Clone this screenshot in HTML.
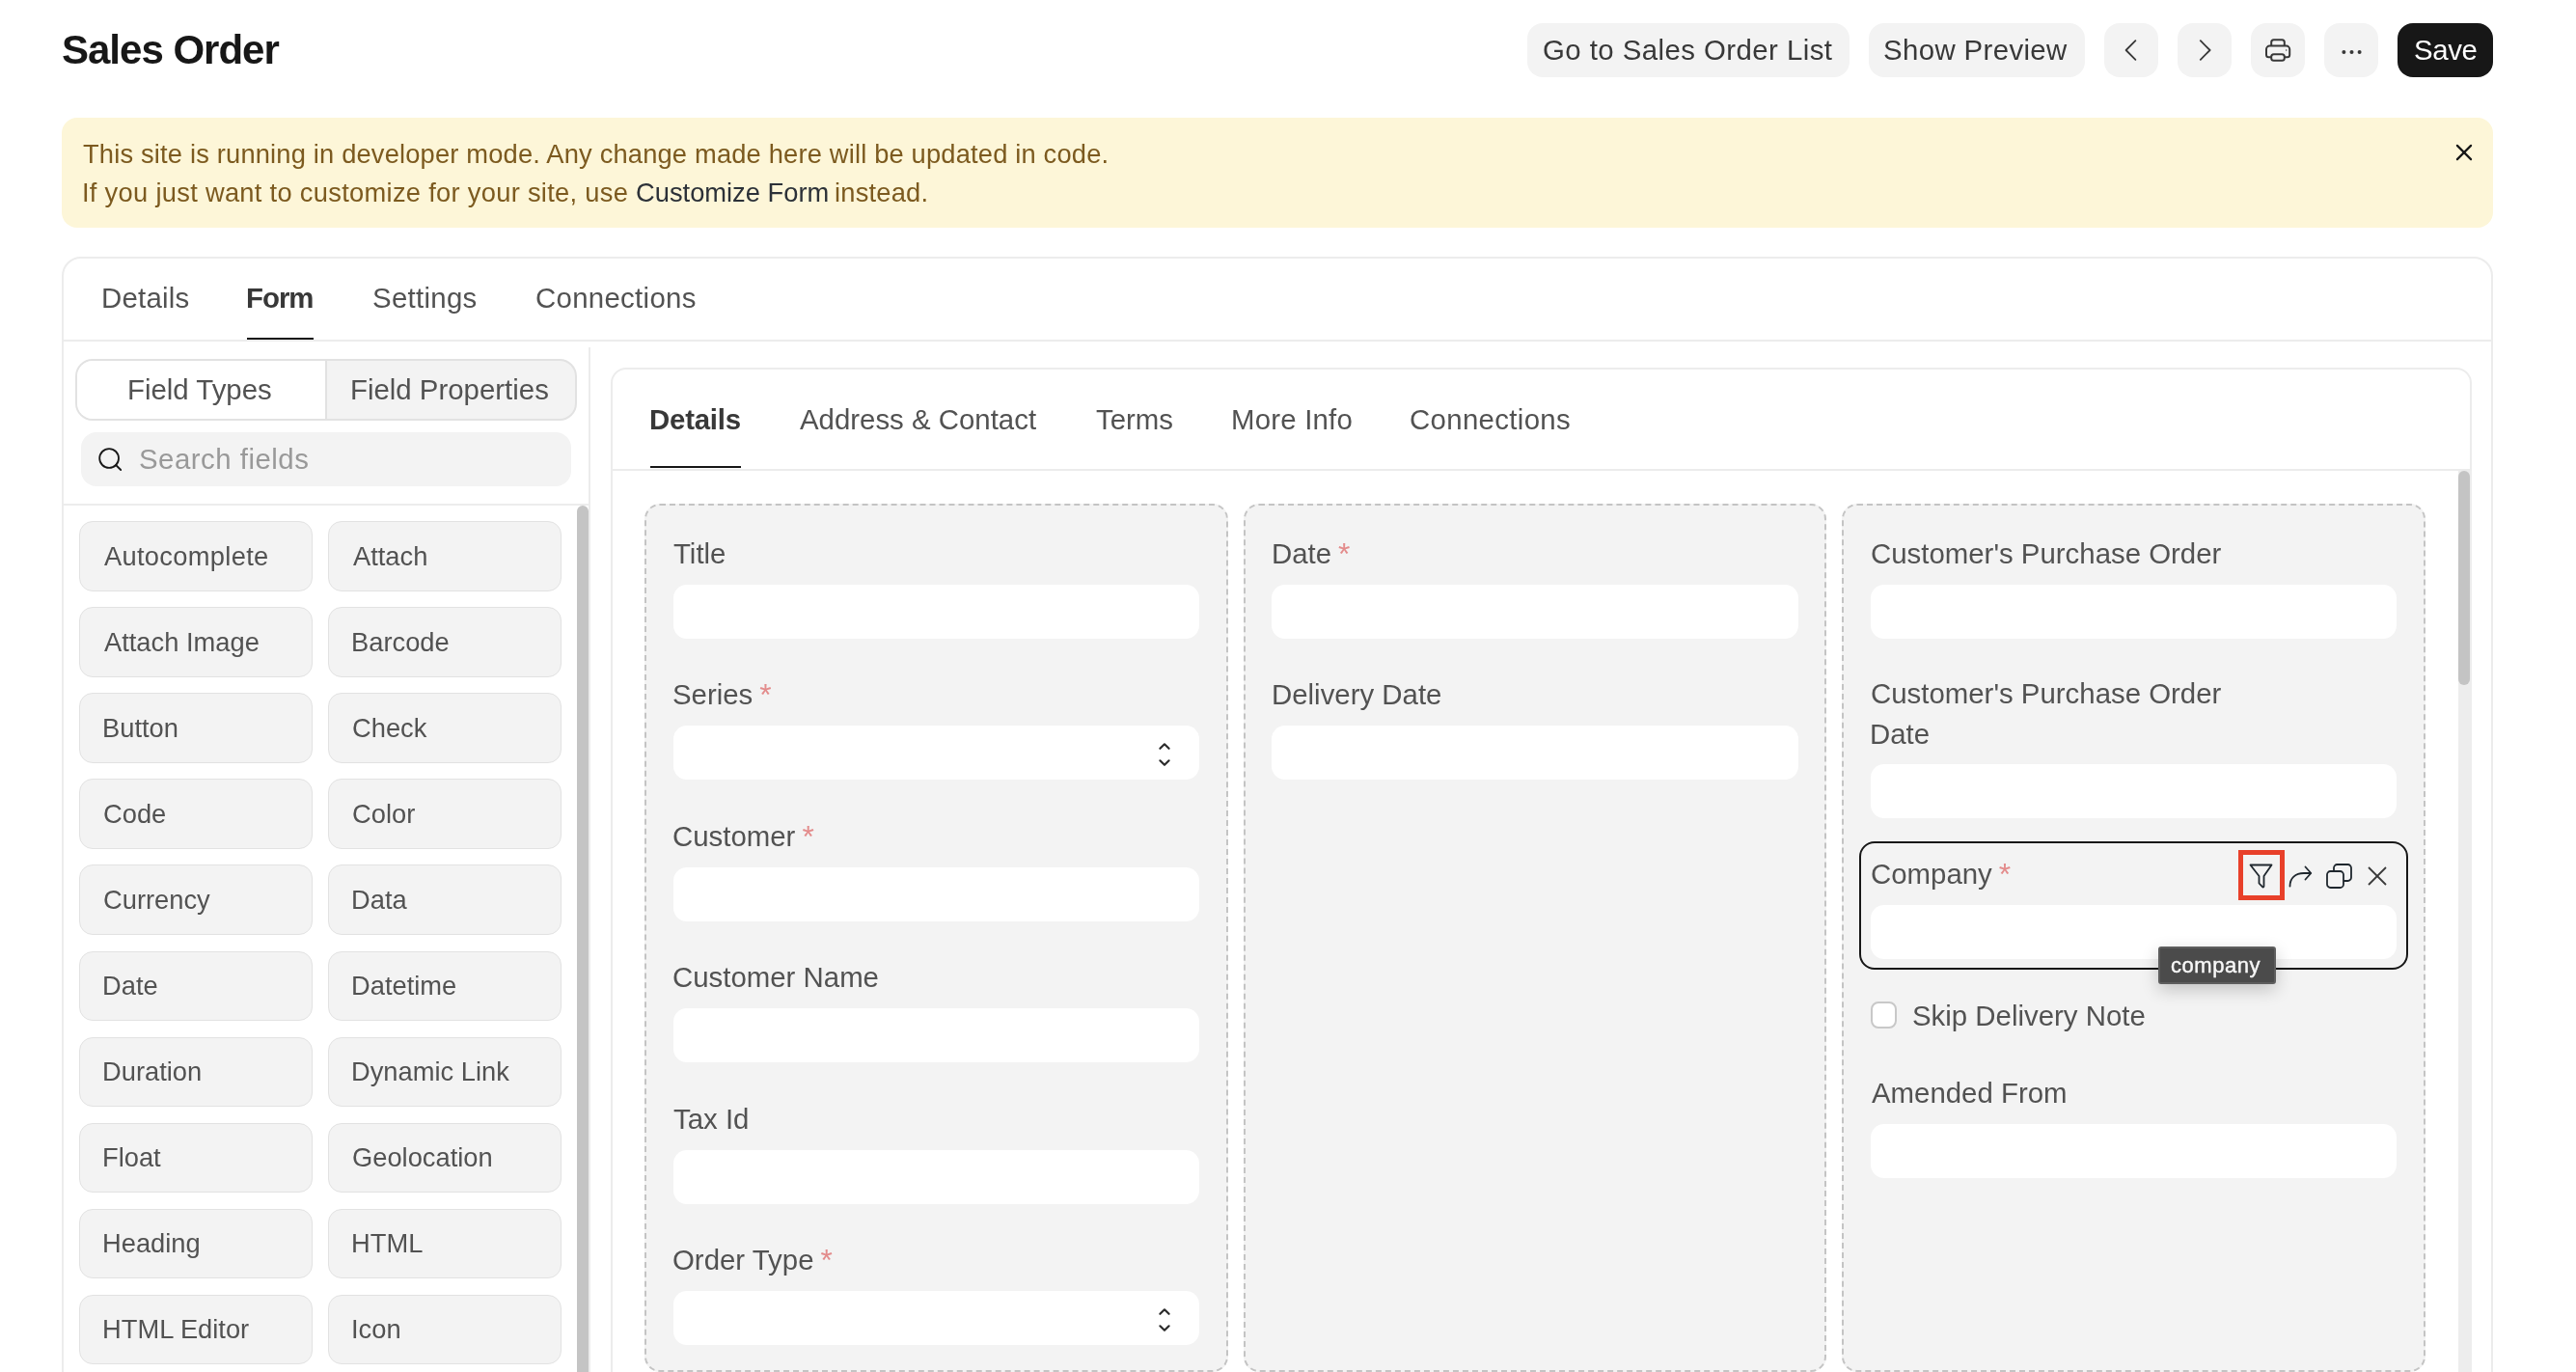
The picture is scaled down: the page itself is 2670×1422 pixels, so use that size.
<!DOCTYPE html>
<html><head><meta charset="utf-8"><title>Sales Order</title>
<style>
html,body{margin:0;padding:0;width:2670px;height:1422px;overflow:hidden;background:#fff;}
body{position:relative;font-family:"Liberation Sans",sans-serif;}
body>div{position:absolute;}
.t{position:absolute;white-space:nowrap;will-change:transform;}
</style></head><body>
<span id="title" class="t" style="left:64.20px;top:30.90px;font-size:42px;line-height:42px;color:#171717;font-weight:700;letter-spacing:-1.000px;">Sales Order</span>
<div style="left:1583px;top:24px;width:334px;height:56px;background:#f3f3f3;border-radius:16px;"></div>
<span id="btn_list" class="t" style="left:1599.00px;top:37.01px;font-size:29.4px;line-height:29.4px;color:#383838;letter-spacing:0.440px;">Go to Sales Order List</span>
<div style="left:1937px;top:24px;width:224px;height:56px;background:#f3f3f3;border-radius:16px;"></div>
<span id="btn_prev" class="t" style="left:1952.40px;top:37.01px;font-size:29.4px;line-height:29.4px;color:#383838;letter-spacing:0.370px;">Show Preview</span>
<div style="left:2181px;top:24px;width:56px;height:56px;background:#f3f3f3;border-radius:16px;"></div>
<div style="left:2257px;top:24px;width:56px;height:56px;background:#f3f3f3;border-radius:16px;"></div>
<div style="left:2333px;top:24px;width:56px;height:56px;background:#f3f3f3;border-radius:16px;"></div>
<div style="left:2409px;top:24px;width:56px;height:56px;background:#f3f3f3;border-radius:16px;"></div>
<div style="left:2485px;top:24px;width:99px;height:56px;background:#171717;border-radius:16px;"></div>
<span id="btn_save" class="t" style="left:2502.00px;top:37.01px;font-size:29.4px;line-height:29.4px;color:#ffffff;letter-spacing:-0.400px;">Save</span>
<svg style="position:absolute;left:2181px;top:24px" width="56" height="56" viewBox="0 0 56 56"><polyline points="32.4,18.2 22.6,28 32.4,37.8" fill="none" stroke="#383838" stroke-width="1.8" stroke-linecap="round" stroke-linejoin="round"/></svg>
<svg style="position:absolute;left:2257px;top:24px" width="56" height="56" viewBox="0 0 56 56"><polyline points="23.8,18.2 33.6,28 23.8,37.8" fill="none" stroke="#383838" stroke-width="1.8" stroke-linecap="round" stroke-linejoin="round"/></svg>
<svg style="position:absolute;left:2333px;top:24px" width="56" height="56" viewBox="0 0 56 56" fill="none" stroke="#383838" stroke-width="2"><path d="M21.2,23.6 V19.7 a2.5,2.5 0 0 1 2.5,-2.5 h8.6 a2.5,2.5 0 0 1 2.5,2.5 V23.6"/><path d="M21.2,35.3 h-2.7 a2.5,2.5 0 0 1 -2.5,-2.5 v-5.7 a3.5,3.5 0 0 1 3.5,-3.5 h17.2 a3.5,3.5 0 0 1 3.5,3.5 v5.7 a2.5,2.5 0 0 1 -2.5,2.5 H34.8"/><rect x="21.2" y="32.3" width="13.6" height="6.4" rx="2.5"/><circle cx="36.7" cy="28" r="0.7" fill="#383838" stroke="none"/></svg>
<svg style="position:absolute;left:2409px;top:24px" width="56" height="56" viewBox="0 0 56 56" fill="#383838"><circle cx="20.4" cy="30" r="2"/><circle cx="28.5" cy="30" r="2"/><circle cx="36.6" cy="30" r="2"/></svg>
<div style="left:64px;top:122px;width:2520px;height:114px;background:#fdf6d8;border-radius:16px;"></div>
<span id="ban1" class="t" style="left:86.00px;top:146.30px;font-size:27.3px;line-height:27.3px;color:#7c5a1f;letter-spacing:0.173px;">This site is running in developer mode. Any change made here will be updated in code.</span>
<span id="ban2" class="t" style="left:85.00px;top:185.55px;font-size:27.3px;line-height:27.3px;color:#7c5a1f;letter-spacing:0.290px;">If you just want to customize for your site, use</span>
<span id="ban2b" class="t" style="left:658.60px;top:185.55px;font-size:27.3px;line-height:27.3px;color:#2c3138;">Customize Form</span>
<span id="ban2c" class="t" style="left:864.60px;top:185.55px;font-size:27.3px;line-height:27.3px;color:#7c5a1f;letter-spacing:0.200px;">instead.</span>
<svg style="position:absolute;left:2538px;top:142px" width="32" height="32" viewBox="0 0 32 32" stroke="#171717" stroke-width="2.2" stroke-linecap="round"><line x1="8.9" y1="8.9" x2="23.1" y2="23.1"/><line x1="23.1" y1="8.9" x2="8.9" y2="23.1"/></svg>
<div style="left:64px;top:266px;width:2520px;height:1334px;border:2px solid #ececec;border-radius:20px;background:#fff;box-sizing:border-box;"></div>
<div style="left:66px;top:352px;width:2516px;height:2px;background:#ececec;"></div>
<span id="tab_details" class="t" style="left:104.80px;top:294.01px;font-size:29.4px;line-height:29.4px;color:#525252;letter-spacing:0.230px;">Details</span>
<span id="tab_form" class="t" style="left:255.40px;top:294.01px;font-size:29.4px;line-height:29.4px;color:#383838;font-weight:700;letter-spacing:-1.000px;">Form</span>
<span id="tab_settings" class="t" style="left:385.80px;top:294.01px;font-size:29.4px;line-height:29.4px;color:#525252;letter-spacing:0.300px;">Settings</span>
<span id="tab_conn" class="t" style="left:554.60px;top:294.01px;font-size:29.4px;line-height:29.4px;color:#525252;letter-spacing:0.300px;">Connections</span>
<div style="left:256px;top:350px;width:69px;height:2px;background:#171717;"></div>
<div style="left:610px;top:360px;width:2px;height:1062px;background:#ececec;"></div>
<div style="left:78px;top:372px;width:520px;height:64px;border:2px solid #e2e2e2;border-radius:18px;background:#f3f3f3;box-sizing:border-box;overflow:hidden;"></div>
<div style="left:80px;top:374px;width:257px;height:60px;background:#fff;border-radius:16px 0 0 16px;"></div>
<div style="left:337px;top:374px;width:2px;height:60px;background:#e2e2e2;"></div>
<span id="ft" class="t" style="left:132.00px;top:389.01px;font-size:29.4px;line-height:29.4px;color:#525252;">Field Types</span>
<span id="fp" class="t" style="left:363.00px;top:389.31px;font-size:29.4px;line-height:29.4px;color:#525252;">Field Properties</span>
<div style="left:84px;top:448px;width:508px;height:56px;background:#f3f3f3;border-radius:16px;"></div>
<svg style="position:absolute;left:96px;top:458px" width="36" height="36" viewBox="0 0 36 36" fill="none" stroke="#171717" stroke-width="1.8"><circle cx="17.1" cy="17" r="9.9"/><line x1="24.1" y1="24" x2="29.2" y2="29" stroke-linecap="round"/></svg>
<span id="search" class="t" style="left:144.40px;top:461.01px;font-size:29.4px;line-height:29.4px;color:#999999;letter-spacing:0.500px;">Search fields</span>
<div style="left:66px;top:522px;width:545px;height:2px;background:#ececec;"></div>
<div style="left:82.3px;top:540.2px;width:241.5px;height:72.39999999999998px;background:#f3f3f3;border:1px solid #e2e2e2;border-radius:14px;box-sizing:border-box;"></div>
<span id="ft0" class="t" style="left:108.00px;top:562.79px;font-size:27.3px;line-height:27.3px;color:#525252;letter-spacing:0.300px;">Autocomplete</span>
<div style="left:340.3px;top:540.2px;width:241.49999999999994px;height:72.39999999999998px;background:#f3f3f3;border:1px solid #e2e2e2;border-radius:14px;box-sizing:border-box;"></div>
<span id="ft1" class="t" style="left:366.00px;top:562.79px;font-size:27.3px;line-height:27.3px;color:#525252;">Attach</span>
<div style="left:82.3px;top:629.2px;width:241.5px;height:72.39999999999998px;background:#f3f3f3;border:1px solid #e2e2e2;border-radius:14px;box-sizing:border-box;"></div>
<span id="ft2" class="t" style="left:108.00px;top:651.84px;font-size:27.3px;line-height:27.3px;color:#525252;">Attach Image</span>
<div style="left:340.3px;top:629.2px;width:241.49999999999994px;height:72.39999999999998px;background:#f3f3f3;border:1px solid #e2e2e2;border-radius:14px;box-sizing:border-box;"></div>
<span id="ft3" class="t" style="left:364.00px;top:651.84px;font-size:27.3px;line-height:27.3px;color:#525252;">Barcode</span>
<div style="left:82.3px;top:718.3px;width:241.5px;height:72.40000000000009px;background:#f3f3f3;border:1px solid #e2e2e2;border-radius:14px;box-sizing:border-box;"></div>
<span id="ft4" class="t" style="left:106.00px;top:740.89px;font-size:27.3px;line-height:27.3px;color:#525252;">Button</span>
<div style="left:340.3px;top:718.3px;width:241.49999999999994px;height:72.40000000000009px;background:#f3f3f3;border:1px solid #e2e2e2;border-radius:14px;box-sizing:border-box;"></div>
<span id="ft5" class="t" style="left:365.00px;top:740.89px;font-size:27.3px;line-height:27.3px;color:#525252;">Check</span>
<div style="left:82.3px;top:807.4px;width:241.5px;height:72.39999999999998px;background:#f3f3f3;border:1px solid #e2e2e2;border-radius:14px;box-sizing:border-box;"></div>
<span id="ft6" class="t" style="left:107.00px;top:829.94px;font-size:27.3px;line-height:27.3px;color:#525252;">Code</span>
<div style="left:340.3px;top:807.4px;width:241.49999999999994px;height:72.39999999999998px;background:#f3f3f3;border:1px solid #e2e2e2;border-radius:14px;box-sizing:border-box;"></div>
<span id="ft7" class="t" style="left:365.00px;top:829.94px;font-size:27.3px;line-height:27.3px;color:#525252;">Color</span>
<div style="left:82.3px;top:896.4px;width:241.5px;height:72.39999999999998px;background:#f3f3f3;border:1px solid #e2e2e2;border-radius:14px;box-sizing:border-box;"></div>
<span id="ft8" class="t" style="left:107.00px;top:919.00px;font-size:27.3px;line-height:27.3px;color:#525252;">Currency</span>
<div style="left:340.3px;top:896.4px;width:241.49999999999994px;height:72.39999999999998px;background:#f3f3f3;border:1px solid #e2e2e2;border-radius:14px;box-sizing:border-box;"></div>
<span id="ft9" class="t" style="left:364.00px;top:919.00px;font-size:27.3px;line-height:27.3px;color:#525252;">Data</span>
<div style="left:82.3px;top:985.5px;width:241.5px;height:72.40000000000009px;background:#f3f3f3;border:1px solid #e2e2e2;border-radius:14px;box-sizing:border-box;"></div>
<span id="ft10" class="t" style="left:106.00px;top:1008.04px;font-size:27.3px;line-height:27.3px;color:#525252;">Date</span>
<div style="left:340.3px;top:985.5px;width:241.49999999999994px;height:72.40000000000009px;background:#f3f3f3;border:1px solid #e2e2e2;border-radius:14px;box-sizing:border-box;"></div>
<span id="ft11" class="t" style="left:364.00px;top:1008.04px;font-size:27.3px;line-height:27.3px;color:#525252;">Datetime</span>
<div style="left:82.3px;top:1074.5px;width:241.5px;height:72.40000000000009px;background:#f3f3f3;border:1px solid #e2e2e2;border-radius:14px;box-sizing:border-box;"></div>
<span id="ft12" class="t" style="left:106.00px;top:1097.10px;font-size:27.3px;line-height:27.3px;color:#525252;">Duration</span>
<div style="left:340.3px;top:1074.5px;width:241.49999999999994px;height:72.40000000000009px;background:#f3f3f3;border:1px solid #e2e2e2;border-radius:14px;box-sizing:border-box;"></div>
<span id="ft13" class="t" style="left:364.00px;top:1097.10px;font-size:27.3px;line-height:27.3px;color:#525252;">Dynamic Link</span>
<div style="left:82.3px;top:1163.6px;width:241.5px;height:72.40000000000009px;background:#f3f3f3;border:1px solid #e2e2e2;border-radius:14px;box-sizing:border-box;"></div>
<span id="ft14" class="t" style="left:106.00px;top:1186.15px;font-size:27.3px;line-height:27.3px;color:#525252;">Float</span>
<div style="left:340.3px;top:1163.6px;width:241.49999999999994px;height:72.40000000000009px;background:#f3f3f3;border:1px solid #e2e2e2;border-radius:14px;box-sizing:border-box;"></div>
<span id="ft15" class="t" style="left:365.00px;top:1186.15px;font-size:27.3px;line-height:27.3px;color:#525252;">Geolocation</span>
<div style="left:82.3px;top:1252.6px;width:241.5px;height:72.40000000000009px;background:#f3f3f3;border:1px solid #e2e2e2;border-radius:14px;box-sizing:border-box;"></div>
<span id="ft16" class="t" style="left:106.00px;top:1275.19px;font-size:27.3px;line-height:27.3px;color:#525252;">Heading</span>
<div style="left:340.3px;top:1252.6px;width:241.49999999999994px;height:72.40000000000009px;background:#f3f3f3;border:1px solid #e2e2e2;border-radius:14px;box-sizing:border-box;"></div>
<span id="ft17" class="t" style="left:364.00px;top:1275.19px;font-size:27.3px;line-height:27.3px;color:#525252;">HTML</span>
<div style="left:82.3px;top:1341.7px;width:241.5px;height:72.39999999999986px;background:#f3f3f3;border:1px solid #e2e2e2;border-radius:14px;box-sizing:border-box;"></div>
<span id="ft18" class="t" style="left:106.00px;top:1364.25px;font-size:27.3px;line-height:27.3px;color:#525252;">HTML Editor</span>
<div style="left:340.3px;top:1341.7px;width:241.49999999999994px;height:72.39999999999986px;background:#f3f3f3;border:1px solid #e2e2e2;border-radius:14px;box-sizing:border-box;"></div>
<span id="ft19" class="t" style="left:364.00px;top:1364.25px;font-size:27.3px;line-height:27.3px;color:#525252;">Icon</span>
<div style="left:598px;top:524px;width:12px;height:976px;background:#c4c4c4;border-radius:6px;"></div>
<div style="left:633px;top:381px;width:1929px;height:1219px;border:2px solid #ececec;border-radius:16px;background:#fff;box-sizing:border-box;"></div>
<div style="left:635px;top:486px;width:1925px;height:2px;background:#ececec;"></div>
<span id="it_details" class="t" style="left:673.00px;top:419.51px;font-size:29.4px;line-height:29.4px;color:#383838;font-weight:700;letter-spacing:-0.220px;">Details</span>
<span id="it_addr" class="t" style="left:829.00px;top:419.51px;font-size:29.4px;line-height:29.4px;color:#525252;">Address &amp; Contact</span>
<span id="it_terms" class="t" style="left:1136.00px;top:419.51px;font-size:29.4px;line-height:29.4px;color:#525252;">Terms</span>
<span id="it_more" class="t" style="left:1275.60px;top:419.51px;font-size:29.4px;line-height:29.4px;color:#525252;letter-spacing:0.200px;">More Info</span>
<span id="it_conn" class="t" style="left:1461.20px;top:419.51px;font-size:29.4px;line-height:29.4px;color:#525252;letter-spacing:0.330px;">Connections</span>
<div style="left:674px;top:483px;width:94px;height:2px;background:#171717;"></div>
<div style="left:2548px;top:488px;width:14px;height:934px;background:#ededed;"></div>
<div style="left:2548px;top:488px;width:12px;height:222px;background:#c4c4c4;border-radius:6px;"></div>
<div style="left:668px;top:522px;width:605px;height:900px;border:2px dashed #c4c4c4;border-radius:16px;background:#f3f3f3;box-sizing:border-box;"></div>
<div style="left:1289px;top:522px;width:604px;height:900px;border:2px dashed #c4c4c4;border-radius:16px;background:#f3f3f3;box-sizing:border-box;"></div>
<div style="left:1909px;top:522px;width:605px;height:900px;border:2px dashed #c4c4c4;border-radius:16px;background:#f3f3f3;box-sizing:border-box;"></div>
<span id="c1_0" class="t" style="left:698.00px;top:559.01px;font-size:29.4px;line-height:29.4px;color:#525252;">Title</span>
<div style="left:698px;top:606.0px;width:545px;height:56.0px;background:#fff;border-radius:14px;"></div>
<span id="c1_1" class="t" style="left:697.00px;top:705.41px;font-size:29.4px;line-height:29.4px;color:#525252;">Series<span style="color:#e38c8c;margin-left:7px;position:relative;top:1px;font-size:1.08em">*</span></span>
<div style="left:698px;top:752.4px;width:545px;height:56.0px;background:#fff;border-radius:14px;"></div>
<svg style="position:absolute;left:1197.4px;top:764.4px" width="20" height="34" viewBox="0 0 20 34" fill="none" stroke="#2b2b2b" stroke-width="2.2" stroke-linecap="round" stroke-linejoin="round"><polyline points="5.4,11.8 10,7.3 14.6,11.8"/><polyline points="5.4,24.3 10,28.8 14.6,24.3"/></svg>
<span id="c1_2" class="t" style="left:697.00px;top:851.81px;font-size:29.4px;line-height:29.4px;color:#525252;">Customer<span style="color:#e38c8c;margin-left:7px;position:relative;top:1px;font-size:1.08em">*</span></span>
<div style="left:698px;top:898.8px;width:545px;height:56.0px;background:#fff;border-radius:14px;"></div>
<span id="c1_3" class="t" style="left:697.00px;top:998.21px;font-size:29.4px;line-height:29.4px;color:#525252;">Customer Name</span>
<div style="left:698px;top:1045.2px;width:545px;height:56.0px;background:#fff;border-radius:14px;"></div>
<span id="c1_4" class="t" style="left:698.00px;top:1144.61px;font-size:29.4px;line-height:29.4px;color:#525252;">Tax Id</span>
<div style="left:698px;top:1191.6px;width:545px;height:56.0px;background:#fff;border-radius:14px;"></div>
<span id="c1_5" class="t" style="left:697.00px;top:1291.01px;font-size:29.4px;line-height:29.4px;color:#525252;">Order Type<span style="color:#e38c8c;margin-left:7px;position:relative;top:1px;font-size:1.08em">*</span></span>
<div style="left:698px;top:1338.0px;width:545px;height:56.0px;background:#fff;border-radius:14px;"></div>
<svg style="position:absolute;left:1197.4px;top:1350.0px" width="20" height="34" viewBox="0 0 20 34" fill="none" stroke="#2b2b2b" stroke-width="2.2" stroke-linecap="round" stroke-linejoin="round"><polyline points="5.4,11.8 10,7.3 14.6,11.8"/><polyline points="5.4,24.3 10,28.8 14.6,24.3"/></svg>
<span id="c2_0" class="t" style="left:1317.60px;top:559.01px;font-size:29.4px;line-height:29.4px;color:#525252;">Date<span style="color:#e38c8c;margin-left:7px;position:relative;top:1px;font-size:1.08em">*</span></span>
<div style="left:1318px;top:606px;width:546px;height:56px;background:#fff;border-radius:14px;"></div>
<span id="c2_1" class="t" style="left:1317.60px;top:705.01px;font-size:29.4px;line-height:29.4px;color:#525252;">Delivery Date</span>
<div style="left:1318px;top:752px;width:546px;height:56px;background:#fff;border-radius:14px;"></div>
<span id="c3_0" class="t" style="left:1939.20px;top:559.26px;font-size:29.4px;line-height:29.4px;color:#525252;">Customer's Purchase Order</span>
<div style="left:1939px;top:606px;width:545px;height:56px;background:#fff;border-radius:14px;"></div>
<span id="c3_1" class="t" style="left:1939.20px;top:704.41px;font-size:29.4px;line-height:29.4px;color:#525252;">Customer's Purchase Order</span>
<span id="c3_1b" class="t" style="left:1938.20px;top:746.01px;font-size:29.4px;line-height:29.4px;color:#525252;">Date</span>
<div style="left:1939px;top:792px;width:545px;height:56px;background:#fff;border-radius:14px;"></div>
<div style="left:1927px;top:871.5px;width:568.5px;height:133.5px;border:2px solid #171717;border-radius:16px;box-sizing:border-box;"></div>
<span id="c3_2" class="t" style="left:1939.00px;top:891.01px;font-size:29.4px;line-height:29.4px;color:#525252;">Company<span style="color:#e38c8c;margin-left:7px;position:relative;top:1px;font-size:1.08em">*</span></span>
<div style="left:1939px;top:938px;width:545px;height:56px;background:#fff;border-radius:14px;"></div>
<div style="left:2320.4px;top:881.4px;width:47.19999999999982px;height:52.10000000000002px;border:5.2px solid #e8402a;box-sizing:border-box;"></div>
<svg style="position:absolute;left:2326px;top:890px" width="36" height="36" viewBox="0 0 36 36" fill="none" stroke="#1f272e" stroke-width="1.8" stroke-linejoin="round"><path d="M6.5,6.5 H28.5 L20.5,18 V28.5 C20.5,29.5 19.6,29.8 19,29.2 L15.5,25.5 V18 Z"/></svg>
<svg style="position:absolute;left:2366px;top:890px" width="36" height="36" viewBox="0 0 36 36" fill="none" stroke="#1f272e" stroke-width="1.8" stroke-linecap="round" stroke-linejoin="round"><path d="M7.5,28.5 C7.5,20 13,15 22,15 H28.5"/><polyline points="23.5,8.5 29.3,15 23.5,21.5"/></svg>
<svg style="position:absolute;left:2406px;top:890px" width="36" height="36" viewBox="0 0 36 36" fill="none" stroke="#1f272e" stroke-width="1.8"><rect x="6" y="13" width="17" height="17" rx="3.5"/><path d="M13,13 V9.5 A3.5,3.5 0 0 1 16.5,6 H27.5 A3.5,3.5 0 0 1 31,9.5 V19.5 A3.5,3.5 0 0 1 27.5,23 H23"/></svg>
<svg style="position:absolute;left:2446px;top:890px" width="36" height="36" viewBox="0 0 36 36" fill="none" stroke="#383838" stroke-width="1.8"><line x1="9" y1="9" x2="27" y2="27"/><line x1="27" y1="9" x2="9" y2="27"/></svg>
<div style="left:2237px;top:981.4px;width:121.80000000000018px;height:38.89999999999998px;background:#4b4b4b;border:2px solid #5e5e5e;box-sizing:border-box;border-radius:3px;box-shadow:0 6px 18px rgba(0,0,0,0.2);"></div>
<span id="tip" class="t" style="left:2250.30px;top:989.60px;font-size:22px;line-height:22px;color:#f8f8f8;letter-spacing:0.550px;-webkit-text-stroke:0.4px #f8f8f8;">company</span>
<div style="left:1939.3px;top:1038.4px;width:27.200000000000045px;height:27.299999999999955px;background:#fff;border:2px solid #c8c8c8;border-radius:8px;box-sizing:border-box;"></div>
<span id="c3_3" class="t" style="left:1982.40px;top:1037.51px;font-size:29.4px;line-height:29.4px;color:#525252;">Skip Delivery Note</span>
<span id="c3_4" class="t" style="left:1940.00px;top:1118.11px;font-size:29.4px;line-height:29.4px;color:#525252;">Amended From</span>
<div style="left:1939px;top:1165px;width:545px;height:56px;background:#fff;border-radius:14px;"></div>
</body></html>
